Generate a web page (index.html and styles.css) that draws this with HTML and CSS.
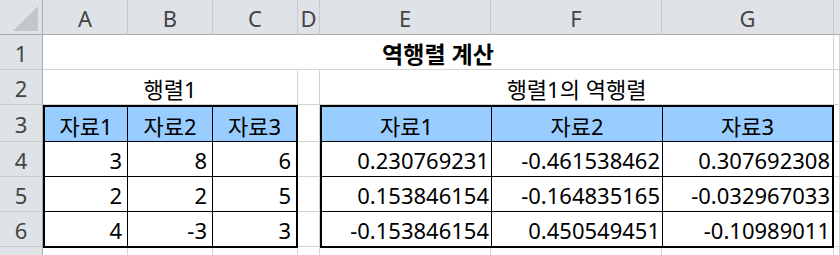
FILE: index.html
```html
<!DOCTYPE html>
<html lang="ko">
<head>
<meta charset="utf-8">
<link rel="stylesheet" href="styles.css">
</head>
<body>
<div class="sheet">
  <div class="corner"><svg class="corner-tri" width="42" height="34" viewBox="0 0 42 34"><polygon points="13,31 38,31 38,6" fill="#c3c6ca"/></svg></div>
  <div class="colhead">A</div>
  <div class="colhead">B</div>
  <div class="colhead">C</div>
  <div class="colhead">D</div>
  <div class="colhead">E</div>
  <div class="colhead">F</div>
  <div class="colhead">G</div>
  <div class="colhead edge"></div>

  <div class="rowhead">1</div>
  <div class="cell span-ag title">역행렬 계산</div>
  <div class="cell"></div>

  <div class="rowhead">2</div>
  <div class="cell span-3 center">행렬1</div>
  <div class="cell"></div>
  <div class="cell span-3 center">행렬1의 역행렬</div>
  <div class="cell"></div>

  <div class="rowhead">3</div>
  <div class="table t1">
    <div class="th">자료1</div><div class="th">자료2</div><div class="th last">자료3</div>
    <div class="td">3</div><div class="td">8</div><div class="td last">6</div>
    <div class="td">2</div><div class="td">2</div><div class="td last">5</div>
    <div class="td end">4</div><div class="td end">-3</div><div class="td last end">3</div>
  </div>
  <div class="cell"></div>
  <div class="table t2">
    <div class="th">자료1</div><div class="th">자료2</div><div class="th last">자료3</div>
    <div class="td">0.230769231</div><div class="td">-0.461538462</div><div class="td last">0.307692308</div>
    <div class="td">0.153846154</div><div class="td">-0.164835165</div><div class="td last">-0.032967033</div>
    <div class="td end">-0.153846154</div><div class="td end">0.450549451</div><div class="td last end">-0.10989011</div>
  </div>
  <div class="cell"></div>

  <div class="rowhead">4</div>
  <div class="cell"></div>
  <div class="cell"></div>

  <div class="rowhead">5</div>
  <div class="cell"></div>
  <div class="cell"></div>

  <div class="rowhead">6</div>
  <div class="cell"></div>
  <div class="cell"></div>

  <div class="rowhead"></div>
  <div class="cell"></div>
  <div class="cell"></div>
  <div class="cell"></div>
  <div class="cell"></div>
  <div class="cell"></div>
  <div class="cell"></div>
  <div class="cell"></div>
  <div class="cell"></div>
</div>
</body>
</html>
```

FILE: styles.css
```css
* { box-sizing: border-box; }
html, body { margin: 0; padding: 0; background: #fff; }
body {
  width: 840px;
  height: 255px;
  overflow: hidden;
  font-family: "Noto Sans", "Noto Sans CJK KR", sans-serif;
  color: #000;
}
.sheet {
  display: grid;
  grid-template-columns: 43px 85px 85px 85px 22px 171px 171px 172px 6px;
  grid-template-rows: 35px 35px 35px 37px 35px 35px 35px 10px;
  font-size: 22px;
}
.corner {
  background: #dfe3e8;
  border-right: 1px solid #ababab;
  border-bottom: 1px solid #ababab;
}
.corner-tri { display: block; }
.colhead {
  background: #dfe3e8;
  border-right: 1px solid #c6c9cd;
  border-bottom: 1px solid #ababab;
  color: #444;
  display: flex;
  align-items: center;
  justify-content: center;
  padding-top: 1px;
}
.colhead.edge { border-right: none; }
.rowhead {
  background: #dfe3e8;
  border-right: 1px solid #ababab;
  border-bottom: 1px solid #c6c9cd;
  color: #444;
  display: flex;
  align-items: center;
  justify-content: center;
  padding-top: 2px;
}
.cell {
  border-right: 1px solid #d4d4d4;
  border-bottom: 1px solid #d4d4d4;
}
.span-ag { grid-column: span 7; }
.span-3 { grid-column: span 3; }
.center, .title {
  display: flex;
  align-items: center;
  justify-content: center;
  padding-top: 2px;
}
.title { font-weight: bold; font-size: 23px; }
.table {
  grid-row: span 4;
  grid-column: span 3;
  margin-bottom: -1px;
  border: 2px solid #000;
  display: grid;
  grid-template-rows: 35px 35px 35px 34px;
  background: #fff;
  position: relative;
  z-index: 1;
}
.t1 { grid-template-columns: 83px 85px 83px; }
.t2 { grid-template-columns: 170px 171px 169px; }
.th, .td {
  border-right: 1px solid #000;
  border-bottom: 1px solid #000;
  display: flex;
  align-items: center;
  padding-top: 2px;
  white-space: nowrap;
}
.th {
  background: #99ccff;
  justify-content: center;
}
.td {
  justify-content: flex-end;
  padding-right: 5px;
}
.t2 .td { padding-right: 2px; }
.last { border-right: none; }
.end { border-bottom: none; }
```
